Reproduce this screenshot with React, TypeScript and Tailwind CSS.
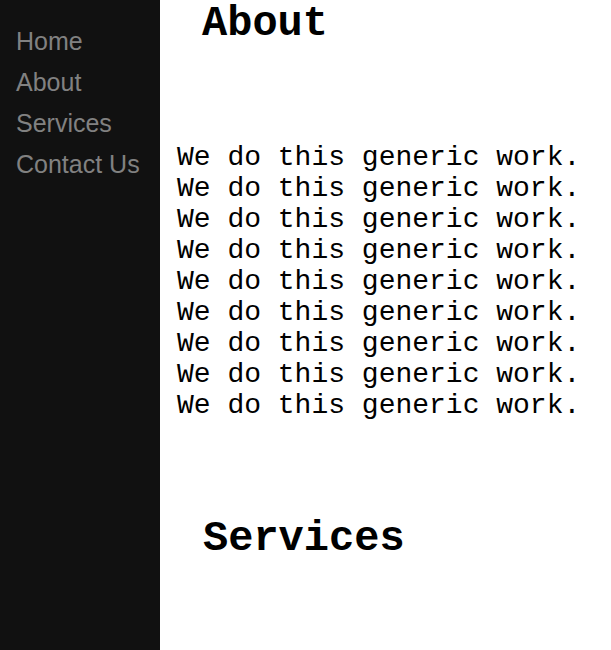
const links = ['Home', 'About', 'Services', 'Contact Us'];

const lines = Array.from({ length: 9 }, () => 'We do this generic work.');

export default function App() {
  return (
    <div className="flex min-h-screen bg-white">
      <nav className="w-[160px] shrink-0 bg-[#111111] pt-[21px] font-['Liberation_Sans',Arial,sans-serif]">
        {links.map((name) => (
          <a
            key={name}
            href={`#${name.toLowerCase().replace(' ', '')}`}
            className="block py-[6px] pl-[16px] pr-[8px] text-[25px] leading-[29px] text-[#818181] no-underline whitespace-nowrap"
          >
            {name}
          </a>
        ))}
      </nav>
      <main className="flex-1 pl-[17px] pr-[10px] font-['Courier_New','Nimbus_Mono_PS','FreeMono','Liberation_Mono',monospace] text-[28px] text-black">
        <h2 className="ml-[25px] text-[42px] font-bold leading-[48px]">About</h2>
        <div className="mt-[94px] leading-[31px] whitespace-nowrap">
          {lines.map((line, i) => (
            <div key={i}>{line}</div>
          ))}
        </div>
        <h2 className="ml-[26px] mt-[94px] text-[42px] font-bold leading-[48px]">Services</h2>
      </main>
    </div>
  );
}
